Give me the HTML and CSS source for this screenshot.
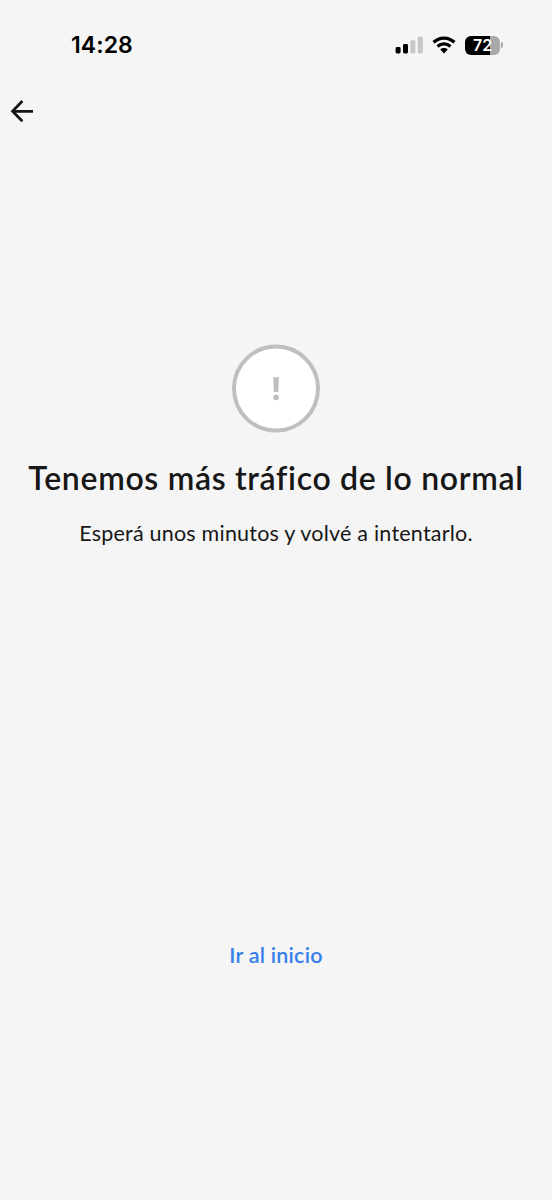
FILE: index.html
```
<!DOCTYPE html>
<html lang="es">
<head>
<meta charset="utf-8">
<meta name="viewport" content="width=device-width">
<title>Tenemos más tráfico de lo normal</title>
<link rel="stylesheet" href="styles.css">
</head>
<body>
<div class="screen">
  <header class="status-bar">
    <time class="clock">14:28</time>
    <div class="indicators">
      <svg class="signal" width="28" height="18" viewBox="0 0 28 18" aria-hidden="true">
        <rect x="0.6" y="11" width="5" height="6.5" rx="1.4"/>
        <rect x="8" y="8" width="5" height="9.5" rx="1.4"/>
        <rect class="dim" x="15.4" y="4.2" width="5" height="13.3" rx="1.4"/>
        <rect class="dim" x="22.8" y="0.5" width="5" height="17" rx="1.4"/>
      </svg>
      <svg class="wifi" width="24" height="18" viewBox="0 0 24 18" aria-hidden="true">
        <path d="M1.6 6.3C7.5 .6 16.5 .6 22.4 6.3" fill="none" stroke="#000" stroke-width="3.3"/>
        <path d="M5.5 10.5c3.7-3.5 9.3-3.5 13 0" fill="none" stroke="#000" stroke-width="3.1"/>
        <path d="M8.2 13.5c2.2-1.9 5.4-1.9 7.6 0L12 17.4z"/>
      </svg>
      <div class="battery"><span class="battery-body">72</span><span class="battery-tip"></span></div>
    </div>
  </header>
  <nav class="toolbar">
    <button class="back" aria-label="Volver">
      <svg width="24" height="24" viewBox="0 0 24 24" fill="none" stroke="#151515" stroke-width="2.7"><path d="M23 12.3H3M12.4 2 2.5 12.3l9.9 10"/></svg>
    </button>
  </nav>
  <main class="message">
    <svg class="alert" width="88" height="89" viewBox="0 0 88 89" aria-hidden="true">
      <circle cx="44" cy="44.6" r="42" fill="#fff" stroke="#bfbfbf" stroke-width="4"/>
      <path d="M41.2 33.2h5.8l-.7 14.8h-4.4z" fill="#bfbfbf"/>
      <circle cx="44.1" cy="53.3" r="2.9" fill="#bfbfbf"/>
    </svg>
    <h1 class="title">Tenemos más tráfico de lo normal</h1>
    <p class="description">Esperá unos minutos y volvé a intentarlo.</p>
  </main>
  <footer class="actions"><a class="home-link" href="#">Ir al inicio</a></footer>
</div>
</body>
</html>
```
FILE: styles.css
```
* { box-sizing: border-box; }
body { margin: 0; background: #f5f5f5; color: #171717; }
.screen { display: flex; flex-direction: column; width: 552px; height: 1200px; overflow: hidden; font-family: Lato, sans-serif; }
.status-bar { display: flex; justify-content: space-between; align-items: center; height: 90px; padding: 0 49px 0 71px; }
.clock { font: 600 23px/28px Inter, sans-serif; letter-spacing: .1px; color: #000; }
.indicators { display: flex; align-items: center; gap: 9px; }
.signal .dim { fill: #c7c7c7; }
.battery { display: flex; align-items: center; gap: 1px; }
.battery-body { width: 35px; height: 19px; border-radius: 6px; background: linear-gradient(90deg, #000 72%, #a9a9a9 72%); color: #fff; font: 600 16px/19px Inter, sans-serif; text-align: center; }
.battery-tip { width: 2px; height: 6px; border-radius: 0 2px 2px 0; background: #aaa; }
.toolbar { height: 44px; padding: 9px 10px; }
.back { display: block; padding: 0; border: 0; background: none; }
.back svg { display: block; }
.message { display: flex; flex-direction: column; align-items: center; height: 766px; padding-top: 210px; }
.title { margin: 25px 0 0; font-size: 32px; line-height: 40px; font-weight: 600; white-space: nowrap; letter-spacing: .68px; }
.description { margin: 22px 0 0; font-size: 21.5px; line-height: 26px; white-space: nowrap; letter-spacing: .22px; }
.actions { display: flex; justify-content: center; padding-top: 42px; }
.home-link { font-size: 21.5px; line-height: 26px; font-weight: 600; color: #3480ec; text-decoration: none; letter-spacing: .2px; }
```
